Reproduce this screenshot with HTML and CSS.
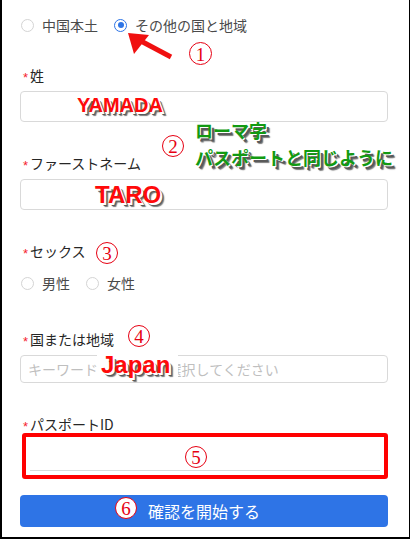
FILE: index.html
```html
<!DOCTYPE html>
<html lang="ja">
<head>
<meta charset="utf-8">
<title>本人確認</title>
<link rel="stylesheet" href="styles.css">
</head>
<body>
<div class="page">
  <div class="radio-group top">
    <span class="radio"><span class="dot"></span><span class="rtext">中国本土</span></span>
    <span class="radio checked"><span class="dot"></span><span class="rtext">その他の国と地域</span></span>
  </div>

  <div class="label l1"><span class="req">*</span>姓</div>
  <div class="input"></div>

  <div class="label l2"><span class="req">*</span>ファーストネーム</div>
  <div class="input"></div>

  <div class="label l3"><span class="req">*</span>セックス</div>
  <div class="radio-group sex">
    <span class="radio"><span class="dot"></span><span class="rtext">男性</span></span>
    <span class="radio"><span class="dot"></span><span class="rtext">女性</span></span>
  </div>

  <div class="label l4"><span class="req">*</span>国または地域</div>
  <div class="select"><span class="placeholder">キーワードで検索して選択してください</span></div>

  <div class="label l5"><span class="req">*</span>パスポートID</div>
  <div class="redbox"><div class="pid"></div></div>

  <div class="button">確認を開始する</div>

  <!-- annotations -->
  <svg class="arrow" width="60" height="36" viewBox="0 0 60 36">
    <line x1="51" y1="29" x2="19" y2="12" stroke="#f01010" stroke-width="5" stroke-linecap="butt"/>
    <polygon points="8,5 29,7 14,26" fill="#f01010"/>
  </svg>
  <span class="num n1">1</span>
  <span class="num n2">2</span>
  <span class="num n3">3</span>
  <span class="num n4">4</span>
  <span class="num n5">5</span>
  <span class="num n6">6</span>

  <span class="note red yamada">YAMADA</span>
  <span class="note red taro">TARO</span>
  <span class="note red japan">Japan</span>
  <div class="note green romaji">ローマ字<br>パスポートと同じように</div>
</div>
</body>
</html>
```

FILE: styles.css
```css
html, body {
  margin: 0;
  padding: 0;
  background: #fff;
}

.page {
  position: relative;
  box-sizing: border-box;
  width: 410px;
  height: 539px;
  border-left: 2px solid #000;
  border-right: 1px solid #000;
  border-bottom: 2px solid #000;
  padding: 0 21px 0 18px;
  overflow: hidden;
  font-family: "Noto Sans CJK JP", "Noto Sans", sans-serif;
  font-size: 14px;
  color: #262626;
}

.radio-group {
  display: flex;
  align-items: center;
  height: 22px;
}
.radio-group.top { margin-top: 14px; }
.radio-group.sex { margin-top: 10px; }

.radio {
  display: flex;
  align-items: center;
  margin-right: 8px;
  margin-left: 1px;
}
.radio + .radio { margin-left: 0; }

.dot {
  box-sizing: border-box;
  width: 13px;
  height: 13px;
  border: 1px solid #d4d4d4;
  border-radius: 50%;
  background: #fff;
  position: relative;
}
.radio.checked .dot {
  border-color: #2e74e6;
}
.radio.checked .dot::after {
  content: "";
  position: absolute;
  left: 2.5px;
  top: 2.5px;
  width: 6px;
  height: 6px;
  border-radius: 50%;
  background: #2e74e6;
}

.rtext {
  padding: 0 8px;
  color: #4a4a4a;
  line-height: 22px;
}

.label {
  height: 22px;
  line-height: 22px;
  color: #262626;
}
.l1 { margin-top: 28px; }
.l2, .l3, .l5 { margin-top: 30px; }
.l4 { margin-top: 34px; }

.req {
  display: inline-block;
  width: 10px;
  padding-left: 3px;
  box-sizing: border-box;
  color: #f5222d;
  font-family: "Liberation Sans", sans-serif;
  font-size: 13px;
  vertical-align: -1px;
  line-height: 1;
}

.input {
  box-sizing: border-box;
  margin-top: 5px;
  height: 31px;
  border: 1px solid #d9d9d9;
  border-radius: 4px;
}

.select {
  box-sizing: border-box;
  margin-top: 5px;
  height: 28px;
  border: 1px solid #d9d9d9;
  border-radius: 4px;
  padding-left: 7px;
  line-height: 26px;
  overflow: hidden;
  white-space: nowrap;
}
.placeholder { color: #bfbfbf; }

.redbox {
  box-sizing: border-box;
  margin: -2px 0 0 2px;
  width: 366px;
  height: 46px;
  border: 4px solid #ff0000;
  border-radius: 3px;
  padding: 0 4px;
}
.pid {
  box-sizing: border-box;
  height: 34px;
  border-bottom: 1px solid #d9d9d9;
}

.button {
  margin-top: 16px;
  height: 32px;
  border-radius: 4px;
  background: #2e74e6;
  color: #fff;
  font-size: 16px;
  line-height: 32px;
  text-align: center;
}

/* annotations */
.arrow {
  position: absolute;
  left: 118px;
  top: 28px;
}

.num {
  position: absolute;
  box-sizing: border-box;
  width: 22px;
  height: 22px;
  border: 1.6px solid #e60012;
  border-radius: 50%;
  display: flex;
  align-items: center;
  justify-content: center;
  padding-top: 1px;
  font-family: "Liberation Serif", serif;
  font-size: 19px;
  line-height: 1;
  color: #e60012;
  background: transparent;
}
.n1 { left: 187px; top: 42px; width: 23px; height: 23px; }
.n2 { left: 160px; top: 135px; }
.n3 { left: 94px; top: 242px; }
.n4 { left: 126px; top: 325px; }
.n5 { left: 183px; top: 446px; }
.n6 { left: 113px; top: 497px; background: #fff; }

.note {
  position: absolute;
  font-family: "Liberation Sans", "Noto Sans CJK JP", sans-serif;
  font-weight: bold;
  line-height: 1;
  white-space: nowrap;
}
.red {
  color: #ff0a0a;
  text-shadow: 1px 1px 0 #fff, 2px 2px 0 #fff, 3px 3px 0 #5a5a5a, 4px 4px 1px #7a7a7a;
}
.yamada { left: 75px; top: 95px; font-size: 20px; }
.taro { left: 93px; top: 183px; font-size: 24px; }
.japan {
  left: 95px;
  top: 352px;
  font-size: 24px;
  padding: 1px 8px 4px 4px;
  background: #fff;
  border-radius: 2px;
}
.green {
  left: 193px;
  top: 117px;
  font-family: "Noto Sans CJK JP", sans-serif;
  font-size: 18px;
  line-height: 27px;
  color: #129a12;
  text-shadow: 1px 1px 0 #fff, 3px 3px 0 #5a5a5a, 4px 4px 1px #7a7a7a;
}
```
